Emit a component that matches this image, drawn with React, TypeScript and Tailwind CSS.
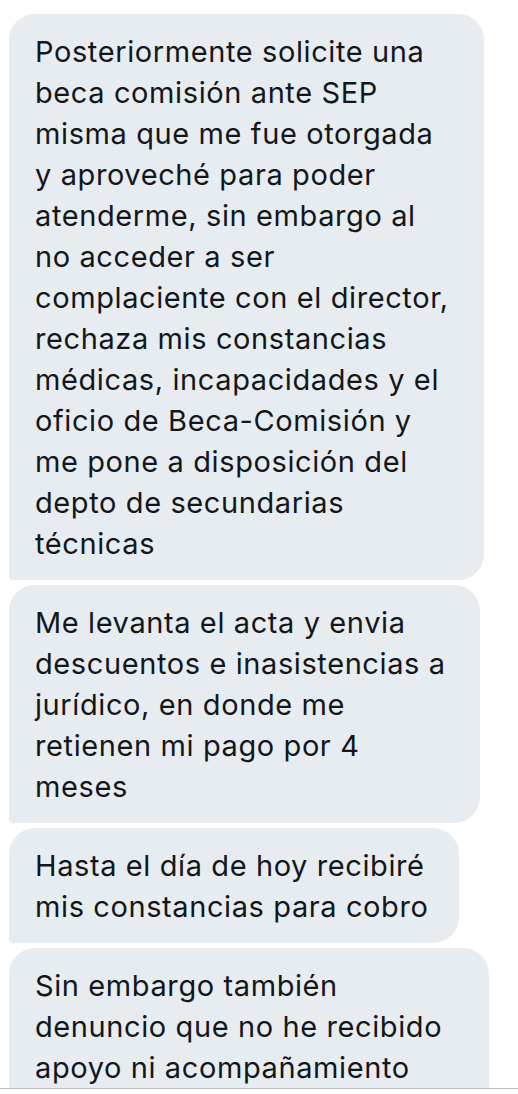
import React from "react";

const bubbles: { w: string; lines: string[] }[] = [
  {
    w: "w-[475px]",
    lines: [
      "Posteriormente solicite una",
      "beca comisión ante SEP",
      "misma que me fue otorgada",
      "y aproveché para poder",
      "atenderme, sin embargo al",
      "no acceder a ser",
      "complaciente con el director,",
      "rechaza mis constancias",
      "médicas, incapacidades y el",
      "oficio de Beca-Comisión y",
      "me pone a disposición del",
      "depto de secundarias",
      "técnicas",
    ],
  },
  {
    w: "w-[471px]",
    lines: [
      "Me levanta el acta y envia",
      "descuentos e inasistencias a",
      "jurídico, en donde me",
      "retienen mi pago por 4",
      "meses",
    ],
  },
  {
    w: "w-[450px]",
    lines: ["Hasta el día de hoy recibiré", "mis constancias para cobro"],
  },
  {
    w: "w-[480px]",
    lines: [
      "Sin embargo también",
      "denuncio que no he recibido",
      "apoyo ni acompañamiento",
      "",
    ],
  },
];

export default function App() {
  return (
    <div className="w-[518px] h-[1094px] bg-white overflow-hidden flex flex-col">
      <div className="h-[1089px] overflow-hidden border-b border-[#bdbdbd] flex flex-col gap-[5px] pl-[9px] pt-[14px]">
        {bubbles.map((b, i) => (
          <div
            key={i}
            className={`${b.w} shrink-0 bg-[#e6ecf0] rounded-[26px] rounded-bl-[4px] pl-[26px] pr-4 pt-[17px] pb-[16px] text-[29px] leading-[41px] tracking-[0.6px] text-[#14171a] whitespace-nowrap`}
            style={{ fontFamily: 'Inter, "Liberation Sans", Arial, sans-serif' }}
          >
            {b.lines.map((l, j) => (
              <div key={j} className="h-[41px]">
                {l}
              </div>
            ))}
          </div>
        ))}
      </div>
    </div>
  );
}
